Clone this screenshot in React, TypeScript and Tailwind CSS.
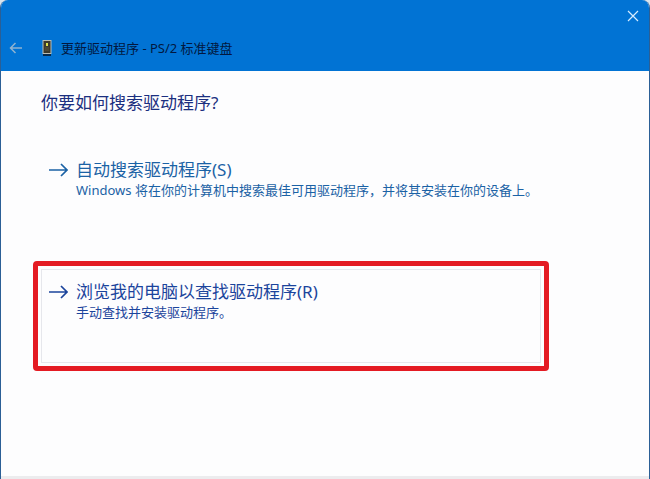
import React from "react";

interface CommandLinkProps {
  title: string;
  description: string;
  className: string;
}

function ArrowIcon() {
  return (
    <svg className="h-4 w-5 shrink-0" viewBox="0 0 20 16" fill="none" stroke="currentColor" strokeWidth="1.7" aria-hidden="true">
      <path d="M1 8H19M13 2L19 8L13 14" />
    </svg>
  );
}

function DeviceIcon() {
  return (
    <svg className="h-4 w-3 shrink-0" viewBox="0 0 12 16" aria-hidden="true">
      <rect x="2" y="14" width="8" height="2" fill="#062a4c" />
      <rect x="2" y="0.5" width="8" height="13" fill="#3c392b" stroke="#b9bdb5" />
      <rect x="5" y="3" width="2" height="3" fill="#d9e04c" />
      <path d="M4 8H8M4 10H8" stroke="#5c573f" />
    </svg>
  );
}

function CommandLink({ title, description, className }: CommandLinkProps) {
  return (
    <button type="button" className={`flex w-full items-start gap-2 border pt-2.5 pl-1.5 text-left ${className}`}>
      <span className="flex h-6 items-center">
        <ArrowIcon />
      </span>
      <span className="flex flex-col">
        <span className="text-[17px] leading-6">{title}</span>
        <span className="text-[13px] leading-4">{description}</span>
      </span>
    </button>
  );
}

export default function App() {
  return (
    <div className="min-h-screen bg-[#d9e4ee] font-['Noto_Sans','Noto_Sans_CJK_SC',sans-serif]">
      <div className="flex min-h-screen flex-col overflow-hidden rounded-t-lg border-x border-[#2b5f96] bg-[#fdfdfe]">
        <header className="bg-[#0173d4] pb-3">
          <div className="flex h-8 items-center justify-end pr-2.5">
            <button type="button" aria-label="关闭" className="text-[#d6ecff]">
              <svg className="size-3" viewBox="0 0 12 12" fill="none" stroke="currentColor" strokeWidth="1.2" aria-hidden="true">
                <path d="M1 1L11 11M11 1L1 11" />
              </svg>
            </button>
          </div>
          <div className="flex h-[27px] items-center pt-1 pl-2">
            <button type="button" aria-label="返回" className="text-[#8fb3d0]">
              <svg className="h-3 w-[14px]" viewBox="0 0 14 12" fill="none" stroke="currentColor" strokeWidth="1.5" aria-hidden="true">
                <path d="M13 6H1.5M6.5 1L1.5 6L6.5 11" />
              </svg>
            </button>
            <span className="ml-[18px]">
              <DeviceIcon />
            </span>
            <h1 className="ml-2 text-[13px] leading-5 text-[#02183f]">更新驱动程序 - PS/2 标准键盘</h1>
          </div>
        </header>

        <main className="flex-1 pt-5 pr-[108px] pl-10">
          <h2 className="text-[17px] leading-6 text-[#1b2f80]">你要如何搜索驱动程序?</h2>
          <div className="mt-8 flex flex-col gap-7">
            <CommandLink
              title="自动搜索驱动程序(S)"
              description="Windows 将在你的计算机中搜索最佳可用驱动程序，并将其安装在你的设备上。"
              className="h-[94px] border-transparent text-[#1b62a5]"
            />
            <div className="relative">
              <CommandLink
                title="浏览我的电脑以查找驱动程序(R)"
                description="手动查找并安装驱动程序。"
                className="h-[94px] border-[#e6e7ec] text-[#1b449c]"
              />
              <div className="pointer-events-none absolute -inset-2 rounded-sm border-5 border-[#e41b23]" />
            </div>
          </div>
        </main>

        <footer className="h-[3px] bg-[#ececee]" />
      </div>
    </div>
  );
}
